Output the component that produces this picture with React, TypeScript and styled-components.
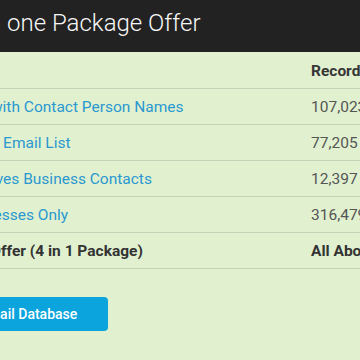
import React from 'react';
import styled, { createGlobalStyle } from 'styled-components';

const GlobalStyle = createGlobalStyle`
  html, body {
    margin: 0;
    padding: 0;
    background: #e1f1d0;
    overflow: hidden;
  }

  *, *::before, *::after {
    box-sizing: border-box;
  }
`;

const Page = styled.div`
  width: 100%;
  min-height: 360px;
  overflow: hidden;
  font-family: 'Roboto', 'Liberation Sans', sans-serif;
  background: #e1f1d0;
`;

const TitleBar = styled.header`
  background: #222222;
  height: 52px;
  overflow: hidden;
`;

const Title = styled.h1`
  margin: 0 0 0 -49px;
  padding-top: 8px;
  font-size: 24px;
  font-weight: 300;
  line-height: 30px;
  color: #f7f7f7;
  white-space: nowrap;
`;

const Accent = styled.span`
  color: #f0a23a;
`;

const Content = styled.main`
  margin-left: -53px;
  padding-top: 1px;
  width: 720px;
`;

const Table = styled.table`
  border-collapse: collapse;
  table-layout: fixed;
  width: 516px;
  font-size: 15.5px;
  line-height: 21px;
`;

const HeadCell = styled.th<{ $wide?: boolean }>`
  width: ${(p) => (p.$wide ? '356px' : '160px')};
  padding: 8px 8px 6px;
  text-align: left;
  font-weight: 700;
  color: #363636;
  border-bottom: 1px solid #c2d3b7;
  white-space: nowrap;
`;

const Cell = styled.td<{ $strong?: boolean }>`
  padding: 8px 8px 6px;
  color: ${(p) => (p.$strong ? '#333333' : '#555555')};
  font-weight: ${(p) => (p.$strong ? 700 : 400)};
  border-bottom: 1px solid #c2d3b7;
  white-space: nowrap;
`;

const ListLink = styled.a`
  color: #2b98cf;
  text-decoration: none;
`;

const BuyButton = styled.a`
  display: inline-block;
  margin-top: 28px;
  padding: 7px 31px 7px 33px;
  background: #0ba4dc;
  border-radius: 4px;
  color: #ffffff;
  font-size: 14px;
  font-weight: 500;
  line-height: 20px;
  text-decoration: none;
  white-space: nowrap;
`;

type Row = {
  name: string;
  records: string;
};

const rows: Row[] = [
  { name: 'Data with Contact Person Names', records: '107,023' },
  { name: 'Dental Email List', records: '77,205' },
  { name: 'Creatives Business Contacts', records: '12,397' },
  { name: 'Businesses Only', records: '316,479' },
];

export default function App() {
  return (
    <Page>
      <GlobalStyle />
      <TitleBar>
        <Title>
          <Accent>All in</Accent> one Package Offer
        </Title>
      </TitleBar>
      <Content>
        <Table>
          <thead>
            <tr>
              <HeadCell $wide>Name</HeadCell>
              <HeadCell>Records</HeadCell>
            </tr>
          </thead>
          <tbody>
            {rows.map((row) => (
              <tr key={row.name}>
                <Cell>
                  <ListLink href="#">{row.name}</ListLink>
                </Cell>
                <Cell>{row.records}</Cell>
              </tr>
            ))}
            <tr>
              <Cell $strong>Best Offer (4 in 1 Package)</Cell>
              <Cell $strong>All Above</Cell>
            </tr>
          </tbody>
        </Table>
        <BuyButton href="#">Email Database</BuyButton>
      </Content>
    </Page>
  );
}
